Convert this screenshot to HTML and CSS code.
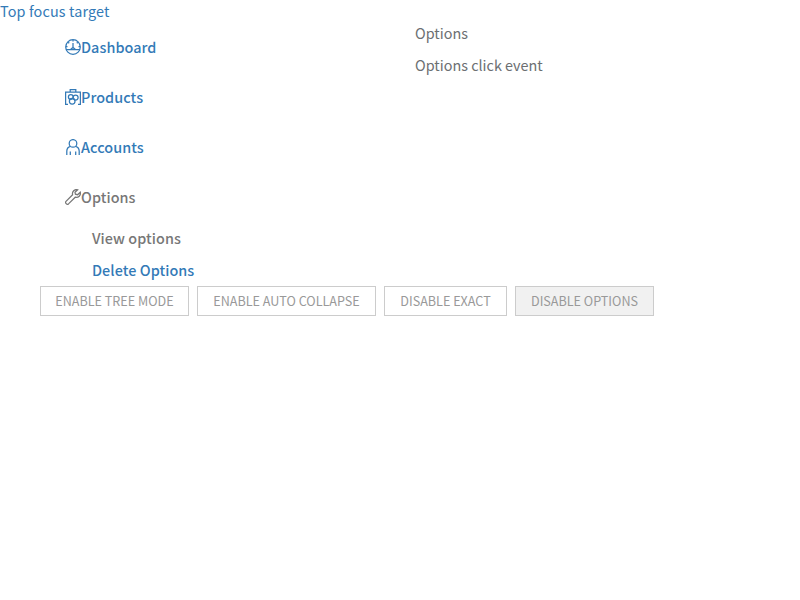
FILE: index.html
```html
<!DOCTYPE html>
<html lang="en">
<head>
<meta charset="utf-8">
<title>Vertical navigation</title>
<link rel="stylesheet" href="styles.css">
</head>
<body>
<a class="focus-target">Top focus target</a>
<main class="columns">
  <nav class="nav">
    <a class="item"><svg class="icon" viewBox="0 0 16 16"><circle cx="8" cy="8" r="7.3"/><path d="M1 10.6h14M8 4v4.5M8 1v1.5M3.2 3.2l1 1M12.8 3.2l-1 1M1 7.5h1.5M13.5 7.5H15M5.6 10.4L8 8.4l2.4 2"/></svg><span>Dashboard</span></a>
    <a class="item"><svg class="icon" viewBox="0 0 16 16"><path d="M3 15.4H.6V3.1h14.8v12.3H13M5.2 3V.6h5.6V3"/><circle cx="5.8" cy="8" r="2.4"/><circle cx="10.6" cy="8.6" r="2.5"/><circle cx="7.2" cy="12.2" r="2.8"/></svg><span>Products</span></a>
    <a class="item"><svg class="icon" viewBox="0 0 16 16"><circle cx="8" cy="4.4" r="3.8"/><path d="M5.6 7.4C3 8 1.8 9.8 1.8 12.2V16M10.4 7.4c2.6.6 3.8 2.4 3.8 4.8V16M5.3 12.5V16M10.7 12.5V16"/></svg><span>Accounts</span></a>
    <a class="item current"><svg class="icon" viewBox="0 0 16 16"><path d="M12.7.8C9.6-.2 6.8 2.6 7.6 5.8L1 12.4c-1.3 1.4.9 3.8 2.5 2.5l6.7-6.7c3.1.8 5.9-1.8 5.1-5L12.6 5.7 10.4 5.2 10 3.3z"/></svg><span>Options</span></a>
    <a class="subitem current">View options</a>
    <a class="subitem">Delete Options</a>
  </nav>
  <section class="content">
    <p>Options</p>
    <p>Options click event</p>
  </section>
</main>
<div class="actions">
  <button class="b1">ENABLE TREE MODE</button>
  <button class="b2">ENABLE AUTO COLLAPSE</button>
  <button class="b3">DISABLE EXACT</button>
  <button class="b4 pressed">DISABLE OPTIONS</button>
</div>
</body>
</html>
```
FILE: styles.css
```css
* { box-sizing: border-box; }
body {
  margin: 0;
  background: #fff;
  color: #6c6f72;
  font: 14.4px/24px "Noto Sans CJK SC", "Noto Sans", sans-serif;
}
a { color: #337ab7; }
.focus-target { display: block; height: 22px; line-height: 22px; letter-spacing: 0.13px; }
.columns { display: grid; grid-template-columns: 400px 400px; height: 264px; }
.nav { display: flex; flex-direction: column; align-items: flex-start; font-weight: 500; letter-spacing: 0.06px; }
.item { display: flex; align-items: center; height: 50px; padding-left: 65px; }
.item span, .subitem { white-space: nowrap; }
.icon { width: 16px; height: 16px; fill: none; stroke: currentColor; stroke-width: 1.25; }
.subitem { height: 32px; line-height: 32px; padding-left: 92px; }
.nav .current { color: #777; }
.content { padding-left: 15px; }
.content p { margin: 0 0 8px; line-height: 24px; }
.content p:first-child { margin-top: -1px; }
.actions { display: flex; gap: 8px; padding-left: 40px; }
button {
  height: 30px;
  padding: 0;
  border: 1px solid #ccc;
  background: #fff;
  color: #999;
  font: 400 12.6px/28px "Noto Sans CJK SC", "Noto Sans", sans-serif;
  white-space: nowrap;
}
.b1 { width: 149px; }
.b2 { width: 179px; }
.b3 { width: 123px; }
.b4 { width: 139px; }
.pressed { background: #f1f1f1; }
```
